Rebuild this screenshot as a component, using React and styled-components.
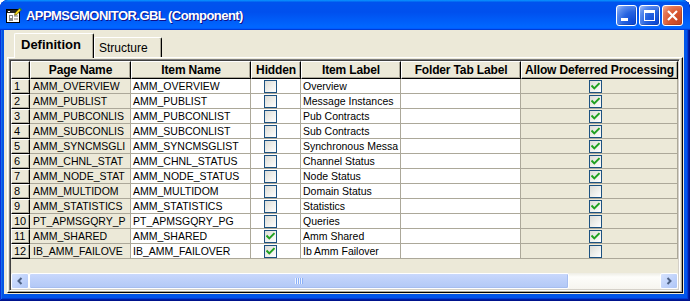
import React from 'react';
import styled, { createGlobalStyle } from 'styled-components';

const Global = createGlobalStyle`
  html, body { margin: 0; padding: 0; background: #fff; }
  body { font-family: "Liberation Sans", Arial, sans-serif; }
`;

const Window = styled.div`
  width: 690px;
  height: 301px;
  box-sizing: border-box;
  display: flex;
  flex-direction: column;
  background: #0055ea;
  border-radius: 8px 8px 0 0;
  overflow: hidden;
  box-shadow: inset -1px -1px #00138c, inset 1px 1px #0831d9, inset -2px -2px #001ea0,
    inset 2px 2px #166aee, inset -3px -3px #003bda, inset 3px 3px #0855dd;
`;

const TitleBar = styled.div`
  height: 30px;
  flex: none;
  box-sizing: border-box;
  display: flex;
  align-items: center;
  padding: 0 7px 0 6px;
  border-radius: 8px 8px 0 0;
  background: linear-gradient(180deg, #0997ff, #0053ee 8%, #0050ee 40%, #06f 88%, #06f 93%, #005bff 95%, #003dd7 96%, #003dd7);
`;

const TitleText = styled.span`
  margin-left: 4px;
  color: #fff;
  font: bold 13px "Liberation Sans", Arial, sans-serif;
  letter-spacing: -0.55px;
  text-shadow: 1px 1px #0f1089;
  white-space: nowrap;
`;

const Controls = styled.div`
  margin-left: auto;
  display: flex;
  gap: 2px;
`;

const CtlButton = styled.div`
  width: 21px;
  height: 21px;
  box-sizing: border-box;
  border: 1px solid #fff;
  border-radius: 3px;
  display: flex;
  align-items: center;
  justify-content: center;
  background: ${(p) =>
    p.$close
      ? 'radial-gradient(circle at 85% 85%, #c44726 0%, #d9562f 45%, #e67a58 75%, #f2b6a0 100%)'
      : 'radial-gradient(circle at 85% 85%, #0a47d6 0%, #2663e0 45%, #5a8cee 75%, #a7c2f7 100%)'};
  box-shadow: inset -1px -1px rgba(0, 0, 0, 0.15);
`;

const Client = styled.div`
  flex: 1;
  min-height: 0;
  margin: 0 6px 7px 4px;
  background: #ece9d8;
  padding: 3px 1px 1px 3px;
  display: flex;
  flex-direction: column;
`;

const TabStrip = styled.div`
  height: 24px;
  flex: none;
  display: flex;
  align-items: flex-end;
  padding-left: 7px;
`;

const Tab = styled.div`
  position: relative;
  z-index: ${(p) => (p.$active ? 1 : 0)};
  box-sizing: border-box;
  width: ${(p) => p.$w}px;
  height: ${(p) => (p.$active ? 25 : 20)}px;
  margin-bottom: ${(p) => (p.$active ? -1 : 0)}px;
  padding: ${(p) => (p.$active ? '0 0 3px 6px' : '0 0 0 4px')};
  display: flex;
  align-items: center;
  background: #ece9d8;
  border-top: 1px solid #fff;
  border-left: 1px solid #fff;
  border-right: 1px solid #000;
  border-radius: 2px 2px 0 0;
  box-shadow: inset -1px 0 #aca899;
  font: ${(p) => (p.$active ? 'bold 13px' : '12px')} "Liberation Sans", Arial, sans-serif;
  color: #000;
`;

const Panel = styled.div`
  flex: 1;
  min-height: 0;
  display: flex;
  border: 1px solid;
  border-color: #fff #000 #000 #fff;
  box-shadow: inset -1px -1px #aca899;
  padding: 1px 2px 1px 1px;
`;

const GridFrame = styled.div`
  flex: 1;
  display: flex;
  flex-direction: column;
  border: 1px solid;
  border-color: #808080 #fff #fff #808080;
  box-shadow: inset 1px 1px #404040, inset -1px -1px #d4d0c8;
  padding: 1px;
  background: #ece9d8;
`;

const HeaderRow = styled.div`
  display: flex;
  height: 18px;
  flex: none;
`;

const HeaderCell = styled.div`
  box-sizing: border-box;
  width: ${(p) => (p.$w ? `${p.$w}px` : 'auto')};
  flex: ${(p) => (p.$w ? 'none' : '1')};
  height: 18px;
  background: #ece9d8;
  border-top: 1px solid #fff;
  border-left: 1px solid #fff;
  border-right: 1px solid #000;
  border-bottom: 1px solid #000;
  box-shadow: inset -1px -1px #aca899;
  font: bold 12px "Liberation Sans", Arial, sans-serif;
  letter-spacing: -0.15px;
  line-height: 16px;
  text-align: center;
  white-space: nowrap;
  overflow: hidden;
  color: #000;
`;

const Row = styled.div`
  display: flex;
  height: 15px;
  flex: none;
`;

const NumCell = styled.div`
  box-sizing: border-box;
  width: 19px;
  flex: none;
  height: 15px;
  background: #ece9d8;
  border-top: 1px solid #fff;
  border-left: 1px solid #fff;
  border-right: 1px solid #000;
  border-bottom: 1px solid #000;
  box-shadow: inset -1px -1px #aca899;
  padding-left: 2px;
  font: 11px "Liberation Sans", Arial, sans-serif;
  line-height: 12px;
  color: #000;
`;

const Cell = styled.div`
  box-sizing: border-box;
  width: ${(p) => (p.$w ? `${p.$w}px` : 'auto')};
  flex: ${(p) => (p.$w ? 'none' : '1')};
  height: 15px;
  background: ${(p) => (p.$ro ? '#ece9d8' : '#fff')};
  border-right: 1px solid #aca899;
  border-bottom: 1px solid #aca899;
  padding-left: ${(p) => p.$pad}px;
  font: 10.5px "Liberation Sans", Arial, sans-serif;
  line-height: 14px;
  color: #000;
  white-space: nowrap;
  overflow: hidden;
  display: ${(p) => (p.$box ? 'flex' : 'block')};
  align-items: center;
`;

const Check = styled.span`
  width: 13px;
  height: 13px;
  box-sizing: border-box;
  border: 1px solid #1c5180;
  background: linear-gradient(135deg, #dcdcd7 0%, #f0f0ec 55%, #fff 100%);
  display: flex;
  align-items: center;
  justify-content: center;
`;

const Spacer = styled.div`
  flex: 1;
  background: #ece9d8;
`;

const ScrollBar = styled.div`
  height: 16px;
  flex: none;
  display: flex;
  background: linear-gradient(180deg, #eeede5 0%, #fdfdfa 25%, #f6f5ef 100%);
`;

const ScrollBtn = styled.div`
  width: 18px;
  flex: none;
  box-sizing: border-box;
  border: 1px solid #fff;
  border-radius: 2px;
  background: linear-gradient(135deg, #d7e3fd 0%, #c2d4fb 50%, #aec5f6 100%);
  display: flex;
  align-items: center;
  justify-content: center;
`;

const Thumb = styled.div`
  width: 540px;
  flex: none;
  box-sizing: border-box;
  border: 1px solid #fff;
  border-radius: 2px;
  background: linear-gradient(180deg, #c9d8fc 0%, #bccff9 50%, #b2c8f6 100%);
  box-shadow: inset -1px -1px #a6bdf0;
  display: flex;
  align-items: center;
  justify-content: center;
`;

const Grip = styled.span`
  width: 8px;
  height: 6px;
  background: repeating-linear-gradient(90deg, #eef4fe 0 1px, #8cb0f8 1px 2px);
`;

const Track = styled.div`
  flex: 1;
`;

const CheckBox = ({ on }) => (
  <Check>
    {on && (
      <svg width="9" height="9" viewBox="0 0 9 9">
        <path d="M1.2 4.2 L3.3 6.4 L7.8 1.8" stroke="#21a121" strokeWidth="2" fill="none" strokeLinecap="square" />
      </svg>
    )}
  </Check>
);

const rows = [
  ['AMM_OVERVIEW', 'AMM_OVERVIEW', false, 'Overview', true],
  ['AMM_PUBLIST', 'AMM_PUBLIST', false, 'Message Instances', true],
  ['AMM_PUBCONLIS', 'AMM_PUBCONLIST', false, 'Pub Contracts', true],
  ['AMM_SUBCONLIS', 'AMM_SUBCONLIST', false, 'Sub Contracts', true],
  ['AMM_SYNCMSGLI', 'AMM_SYNCMSGLIST', false, 'Synchronous Messa', true],
  ['AMM_CHNL_STAT', 'AMM_CHNL_STATUS', false, 'Channel Status', true],
  ['AMM_NODE_STAT', 'AMM_NODE_STATUS', false, 'Node Status', true],
  ['AMM_MULTIDOM', 'AMM_MULTIDOM', false, 'Domain Status', false],
  ['AMM_STATISTICS', 'AMM_STATISTICS', false, 'Statistics', true],
  ['PT_APMSGQRY_P', 'PT_APMSGQRY_PG', false, 'Queries', false],
  ['AMM_SHARED', 'AMM_SHARED', true, 'Amm Shared', true],
  ['IB_AMM_FAILOVE', 'IB_AMM_FAILOVER', true, 'Ib Amm Failover', false],
];

const AppIcon = () => (
  <svg width="16" height="16" viewBox="0 0 16 16">
    <rect x="0.5" y="2.5" width="13" height="13" fill="#fff" stroke="#000" />
    <rect x="1" y="3" width="12" height="3" fill="#222" />
    <rect x="2" y="4" width="2" height="1" fill="#fff" />
    <rect x="3" y="8" width="4" height="6" fill="#8a8a8a" />
    <rect x="4" y="9" width="2" height="2" fill="#fff" />
    <rect x="8" y="8" width="4" height="2" fill="#bdbdbd" />
    <rect x="8" y="11" width="4" height="2" fill="#bdbdbd" />
    <path d="M9 6 L13.5 1.2 L15.3 3 L10.8 7.6 L8.6 8.2 Z" fill="#f2d21b" stroke="#3a3a00" strokeWidth="0.6" />
    <path d="M13.5 1.2 L15.3 3" stroke="#2d9a2d" strokeWidth="1.4" />
  </svg>
);

export default function App() {
  return (
    <>
      <Global />
      <Window>
        <TitleBar>
          <AppIcon />
          <TitleText>APPMSGMONITOR.GBL (Component)</TitleText>
          <Controls>
            <CtlButton>
              <svg width="19" height="19" viewBox="0 0 19 19">
                <rect x="4" y="12" width="7" height="3" fill="#fff" />
              </svg>
            </CtlButton>
            <CtlButton>
              <svg width="19" height="19" viewBox="0 0 19 19">
                <rect x="4.5" y="4.5" width="10" height="10" fill="none" stroke="#fff" />
                <rect x="4" y="4" width="11" height="3" fill="#fff" />
              </svg>
            </CtlButton>
            <CtlButton $close>
              <svg width="19" height="19" viewBox="0 0 19 19">
                <path d="M5 5 L14 14 M14 5 L5 14" stroke="#fff" strokeWidth="2.2" />
              </svg>
            </CtlButton>
          </Controls>
        </TitleBar>
        <Client>
          <TabStrip>
            <Tab $active $w={80}>Definition</Tab>
            <Tab $w={68}>Structure</Tab>
          </TabStrip>
          <Panel>
            <GridFrame>
              <HeaderRow>
                <HeaderCell $w={19} />
                <HeaderCell $w={101}>Page Name</HeaderCell>
                <HeaderCell $w={120}>Item Name</HeaderCell>
                <HeaderCell $w={50}>Hidden</HeaderCell>
                <HeaderCell $w={100}>Item Label</HeaderCell>
                <HeaderCell $w={120}>Folder Tab Label</HeaderCell>
                <HeaderCell>Allow Deferred Processing</HeaderCell>
              </HeaderRow>
              {rows.map((r, i) => (
                <Row key={i}>
                  <NumCell>{i + 1}</NumCell>
                  <Cell $w={101} $ro $pad={3}>{r[0]}</Cell>
                  <Cell $w={120} $pad={2}>{r[1]}</Cell>
                  <Cell $w={50} $pad={13} $box>
                    <CheckBox on={r[2]} />
                  </Cell>
                  <Cell $w={100} $pad={2}>{r[3]}</Cell>
                  <Cell $w={120} $pad={2} />
                  <Cell $ro $pad={68} $box>
                    <CheckBox on={r[4]} />
                  </Cell>
                </Row>
              ))}
              <Spacer />
              <ScrollBar>
                <ScrollBtn>
                  <svg width="8" height="8" viewBox="0 0 8 8">
                    <path d="M5.5 1 L2.5 4 L5.5 7" stroke="#4d6185" strokeWidth="2" fill="none" />
                  </svg>
                </ScrollBtn>
                <Thumb>
                  <Grip />
                </Thumb>
                <Track />
                <ScrollBtn>
                  <svg width="8" height="8" viewBox="0 0 8 8">
                    <path d="M2.5 1 L5.5 4 L2.5 7" stroke="#4d6185" strokeWidth="2" fill="none" />
                  </svg>
                </ScrollBtn>
              </ScrollBar>
            </GridFrame>
          </Panel>
        </Client>
      </Window>
    </>
  );
}
